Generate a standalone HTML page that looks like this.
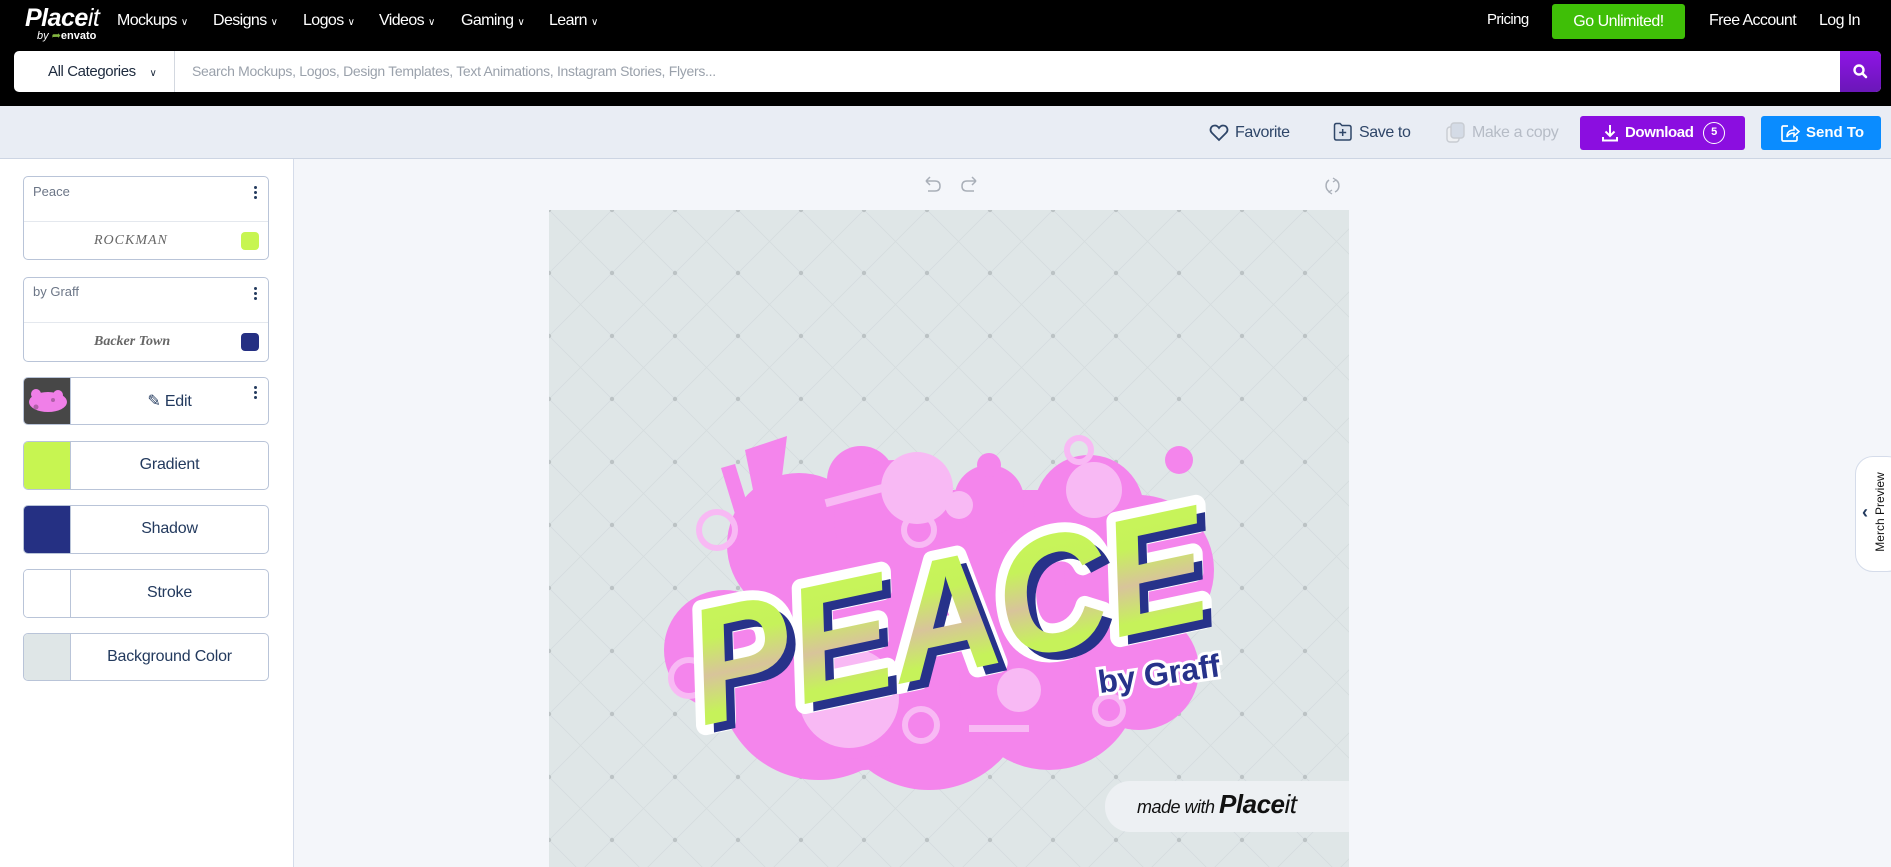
<!DOCTYPE html>
<html><head><meta charset="utf-8"><style>
*{box-sizing:border-box;margin:0;padding:0}
body{width:1891px;height:867px;overflow:hidden;background:#f4f6fa;font-family:"Liberation Sans",sans-serif;position:relative;color:#233a5e}
.abs{position:absolute}
#top{left:0;top:0;width:1891px;height:106px;background:#000}
.nav{color:#fff;font-size:16px;top:12px;letter-spacing:-0.6px}
.nav .c{font-size:10px;margin-left:4px}
#search{left:14px;top:51px;width:1867px;height:41px;background:#fff;border-radius:5px;overflow:hidden}
#tb{left:0;top:106px;width:1891px;height:53px;background:#e9edf4;border-bottom:1px solid #cdd5e3}
.tbi{top:124px;font-size:16px;color:#2f4668;letter-spacing:-0.4px}
#left{left:0;top:159px;width:294px;height:708px;background:#fff;border-right:1px solid #d5dcea}
.card{position:absolute;left:23px;width:246px;border:1px solid #b9c4d8;border-radius:5px;background:#fff;overflow:hidden}
.sw{position:absolute;left:0;top:0;width:47px;height:100%;border-right:1px solid #b9c4d8}
.lbl{position:absolute;left:47px;right:0;text-align:center;font-size:16px;color:#233a5e;letter-spacing:-0.2px}
.dots{position:absolute;right:10px;width:4px}
.dots i{display:block;width:3px;height:3px;border-radius:50%;background:#233a5e;margin-bottom:2px}
</style></head><body>
<div id="top" class="abs"></div>
<div class="abs" style="left:25px;top:4px;color:#fff;font-style:italic;font-size:25px;letter-spacing:-0.5px"><b>Place</b><span style="font-weight:normal">it</span></div>
<div class="abs" style="left:37px;top:29px;color:#fff;font-size:11px"><i>by</i> <span style="color:#82b541">&#10150;</span><b>envato</b></div>
<div class="abs nav" style="left:117px">Mockups<span class="c">&#8744;</span></div>
<div class="abs nav" style="left:213px">Designs<span class="c">&#8744;</span></div>
<div class="abs nav" style="left:303px">Logos<span class="c">&#8744;</span></div>
<div class="abs nav" style="left:379px">Videos<span class="c">&#8744;</span></div>
<div class="abs nav" style="left:461px">Gaming<span class="c">&#8744;</span></div>
<div class="abs nav" style="left:549px">Learn<span class="c">&#8744;</span></div>
<div class="abs nav" style="left:1487px;top:11px;font-size:15px">Pricing</div>
<div class="abs" style="left:1552px;top:4px;width:133px;height:35px;background:#3fbf07;border-radius:3px;color:#fff;font-size:16px;text-align:center;line-height:35px;letter-spacing:-0.5px">Go Unlimited!</div>
<div class="abs nav" style="left:1709px;font-size:16px">Free Account</div>
<div class="abs nav" style="left:1819px;font-size:16px">Log In</div>
<div id="search" class="abs">
 <div class="abs" style="left:0;top:0;width:161px;height:41px;border-right:1px solid #d3d8e0;font-size:15px;color:#1d2a3d;line-height:41px;padding-left:34px;letter-spacing:-0.4px">All Categories <span style="font-size:10px;margin-left:10px">&#8744;</span></div>
 <div class="abs" style="left:178px;top:0;line-height:41px;font-size:14px;color:#9aa1ab;letter-spacing:-0.3px">Search Mockups, Logos, Design Templates, Text Animations, Instagram Stories, Flyers...</div>
 <div class="abs" style="left:1826px;top:0;width:41px;height:41px;background:linear-gradient(#8f14e6,#6a17b8)">
  <svg width="41" height="41"><circle cx="19" cy="19" r="4.5" fill="none" stroke="#fff" stroke-width="2.4"/><line x1="22.5" y1="22.5" x2="26" y2="26" stroke="#fff" stroke-width="2.6" stroke-linecap="round"/></svg>
 </div>
</div>
<div id="tb" class="abs"></div>
<svg class="abs" style="left:1209px;top:123px" width="20" height="20"><path d="M10 17 L3 10 C0 7 2 2.5 6 2.5 C8 2.5 9.3 4 10 5 C10.7 4 12 2.5 14 2.5 C18 2.5 20 7 17 10 Z" fill="none" stroke="#2f4668" stroke-width="1.8"/></svg>
<div class="abs tbi" style="left:1235px">Favorite</div>
<svg class="abs" style="left:1333px;top:122px" width="20" height="20"><path d="M1.5 3.5 Q1.5 1.5 3.5 1.5 L7 1.5 L9 3.5 L16 3.5 Q18 3.5 18 5.5 L18 16 Q18 18 16 18 L3.5 18 Q1.5 18 1.5 16 Z" fill="#dfe5ef" stroke="#2f4668" stroke-width="1.5"/><path d="M9.7 7 V14 M6.2 10.5 H13.2" stroke="#2f4668" stroke-width="1.5"/></svg>
<div class="abs tbi" style="left:1359px">Save to</div>
<svg class="abs" style="left:1446px;top:122px" width="20" height="22"><rect x="1" y="5" width="12" height="15" rx="3" fill="#eef0f3" stroke="#c8ccd2" stroke-width="1.4"/><rect x="5" y="1" width="13" height="15" rx="3" fill="#d4dbe6" stroke="#c8ccd2" stroke-width="1.4"/></svg>
<div class="abs tbi" style="left:1472px;color:#b6bcc6">Make a copy</div>
<div class="abs" style="left:1580px;top:116px;width:165px;height:34px;background:#8b0ee0;border-radius:3px;color:#fff;font-weight:bold;font-size:15px;line-height:34px;letter-spacing:-0.4px">
 <svg class="abs" style="left:21px;top:8px" width="18" height="18"><path d="M9 1 V12 M4.5 7.5 L9 12 L13.5 7.5 M2 13 V16.5 H16 V13" fill="none" stroke="#fff" stroke-width="2"/></svg>
 <span class="abs" style="left:45px">Download</span>
 <span class="abs" style="left:123px;top:6px;width:22px;height:22px;border:1.5px solid #fff;border-radius:50%;font-size:11px;line-height:19px;text-align:center">5</span>
</div>
<div class="abs" style="left:1761px;top:116px;width:120px;height:34px;background:#0a8cff;border-radius:3px;color:#fff;font-weight:bold;font-size:15px;line-height:34px">
 <svg class="abs" style="left:19px;top:8px" width="20" height="19"><path d="M8 2 H3.5 Q2 2 2 3.5 V15.5 Q2 17 3.5 17 H15.5 Q17 17 17 15.5 V12" fill="none" stroke="#fff" stroke-width="1.7"/><path d="M7 13 Q7 6 14 6 V3 L19 7.5 L14 12 V9 Q9 9 7 13 Z" fill="none" stroke="#fff" stroke-width="1.6"/></svg>
 <span class="abs" style="left:45px">Send To</span>
</div>
<div id="left" class="abs"></div>
<div class="card" style="top:176px;height:84px">
 <div class="abs" style="left:9px;top:7px;font-size:13px;color:#6c7687">Peace</div>
 <div class="dots" style="top:9px"><i></i><i></i><i></i></div>
 <div class="abs" style="left:0;right:0;top:44px;border-top:1px solid #e4e8ee"></div>
 <div class="abs" style="left:70px;top:56px;font-family:'Liberation Serif',serif;font-style:italic;font-size:14px;color:#666;letter-spacing:1px">ROCKMAN</div>
 <div class="abs" style="left:217px;top:55px;width:18px;height:18px;border-radius:4px;background:#c7f551"></div>
</div>
<div class="card" style="top:277px;height:85px">
 <div class="abs" style="left:9px;top:6px;font-size:13px;color:#6c7687">by Graff</div>
 <div class="dots" style="top:9px"><i></i><i></i><i></i></div>
 <div class="abs" style="left:0;right:0;top:44px;border-top:1px solid #e4e8ee"></div>
 <div class="abs" style="left:70px;top:56px;font-family:'Liberation Serif',serif;font-weight:bold;font-style:italic;font-size:14px;color:#666">Backer Town</div>
 <div class="abs" style="left:217px;top:55px;width:18px;height:18px;border-radius:4px;background:#253083"></div>
</div>
<div class="card" style="top:377px;height:48px">
 <div class="sw" style="background:#474747;overflow:hidden"><svg width="47" height="46"><ellipse cx="24" cy="24" rx="19" ry="10" fill="#f07fe8"/><circle cx="12" cy="16" r="5" fill="#f07fe8"/><circle cx="34" cy="17" r="5" fill="#f07fe8"/><circle cx="12" cy="29" r="2.5" fill="#b060a8"/><circle cx="29" cy="22" r="2" fill="#b060a8"/></svg></div>
 <div class="lbl" style="top:13px">&#9998; Edit</div>
 <div class="dots" style="top:8px"><i></i><i></i><i></i></div>
</div>
<div class="card" style="top:441px;height:49px"><div class="sw" style="background:#c7f551"></div><div class="lbl" style="top:14px">Gradient</div></div>
<div class="card" style="top:505px;height:49px"><div class="sw" style="background:#253083"></div><div class="lbl" style="top:14px">Shadow</div></div>
<div class="card" style="top:569px;height:49px"><div class="sw" style="background:#fff"></div><div class="lbl" style="top:14px">Stroke</div></div>
<div class="card" style="top:633px;height:48px"><div class="sw" style="background:#dfe6e7"></div><div class="lbl" style="top:14px">Background Color</div></div>

<svg class="abs" style="left:923px;top:176px" width="60" height="20"><path d="M3 5 H12 Q17 5 17 10 Q17 15 12 15 H5 M3 5 L7 1 M3 5 L7 9" fill="none" stroke="#a9afb8" stroke-width="1.5"/><path d="M53 5 H44 Q39 5 39 10 Q39 15 44 15 H51 M53 5 L49 1 M53 5 L49 9" fill="none" stroke="#a9afb8" stroke-width="1.5"/></svg>
<svg class="abs" style="left:1324px;top:176px" width="18" height="20"><path d="M5 4 A7 7 0 0 0 6 16 M12 4 A7 7 0 0 1 11 16" fill="none" stroke="#a9afb8" stroke-width="1.5"/><path d="M9 2 L12 4 L9 6 M8 14 L5 16 L8 18" fill="none" stroke="#a9afb8" stroke-width="1.3"/></svg>

<svg class="abs" style="left:549px;top:210px" width="800" height="657" viewBox="0 0 800 657">
 <defs>
  <pattern id="dm" width="63" height="63" patternUnits="userSpaceOnUse">
   <path d="M0 0 L63 63 M63 0 L0 63" stroke="#d5dcde" stroke-width="0.8"/>
   <circle cx="0" cy="0" r="2.2" fill="#bcc3c5"/><circle cx="63" cy="0" r="2.2" fill="#bcc3c5"/><circle cx="0" cy="63" r="2.2" fill="#bcc3c5"/><circle cx="63" cy="63" r="2.2" fill="#bcc3c5"/>
  </pattern>
  <linearGradient id="lg" x1="0" y1="0" x2="0" y2="1">
   <stop offset="0" stop-color="#c9f75a"/><stop offset="0.35" stop-color="#c6f25a"/><stop offset="0.55" stop-color="#d8c49a"/><stop offset="0.75" stop-color="#c6f25a"/><stop offset="1" stop-color="#c6f25a"/>
  </linearGradient>
 </defs>
 <rect width="800" height="657" fill="#dfe6e7"/>
 <rect width="800" height="657" fill="url(#dm)"/>
 <g fill="#f485ec">
  <polygon points="196,240 238,226 228,308 210,310"/>
  <polygon points="172,258 186,254 208,325 194,330"/>
  <circle cx="312" cy="270" r="34"/><circle cx="250" cy="335" r="72"/><circle cx="345" cy="310" r="60"/>
  <rect x="310" y="280" width="250" height="200"/>
  <circle cx="440" cy="290" r="35"/><circle cx="540" cy="300" r="55"/><circle cx="590" cy="360" r="75"/>
  <circle cx="175" cy="440" r="60"/><circle cx="270" cy="470" r="100"/><circle cx="380" cy="480" r="100"/><circle cx="500" cy="470" r="90"/><circle cx="590" cy="460" r="60"/>
  <circle cx="630" cy="250" r="14"/><circle cx="440" cy="255" r="12"/>
  <polygon points="288,550 340,545 342,558 290,562"/>
 </g>
 <g fill="#f8b9f4">
  <circle cx="368" cy="278" r="36"/><circle cx="410" cy="295" r="14"/><circle cx="300" cy="488" r="50"/><circle cx="470" cy="480" r="22"/><circle cx="545" cy="280" r="28"/>
  <rect x="275" y="275" width="110" height="8" transform="rotate(-15 330 280)"/><rect x="420" y="515" width="60" height="7"/>
 </g>
 <g fill="none" stroke="#f8b9f4" stroke-width="6">
  <circle cx="530" cy="240" r="12"/><circle cx="370" cy="320" r="15"/><circle cx="140" cy="468" r="18"/><circle cx="372" cy="515" r="16"/><circle cx="168" cy="320" r="18"/><circle cx="560" cy="500" r="14"/>
 </g>
 <g transform="rotate(-12 400 400)" font-family="Liberation Sans,sans-serif" font-weight="bold" font-style="italic">
  <text x="135" y="462" font-size="165" textLength="525" lengthAdjust="spacingAndGlyphs" fill="#fff" stroke="#fff" stroke-width="20" stroke-linejoin="round">PEACE</text>
  <text x="142" y="471" font-size="165" textLength="525" lengthAdjust="spacingAndGlyphs" fill="#27328a">PEACE</text>
  <text x="135" y="462" font-size="165" textLength="525" lengthAdjust="spacingAndGlyphs" fill="url(#lg)">PEACE</text>
 </g>
 <text x="548" y="476" font-family="Liberation Sans,sans-serif" font-weight="bold" font-size="32" fill="#27328a" stroke="#fff" stroke-width="6" paint-order="stroke" transform="rotate(-8 600 460)">by Graff</text>
 <rect x="556" y="571" width="280" height="51" rx="25" fill="#edf0f3"/>
 <text x="588" y="603" font-family="Liberation Sans,sans-serif" font-style="italic" font-size="18" fill="#111" letter-spacing="-0.5">made with <tspan font-weight="bold" font-size="26">Place</tspan><tspan font-size="26">it</tspan></text>
</svg>
<div class="abs" style="left:1855px;top:456px;width:50px;height:116px;background:#fff;border:1px solid #d5dcea;border-radius:18px"></div>
<div class="abs" style="left:1862px;top:502px;font-size:18px;font-weight:bold;color:#233a5e">&#8249;</div>
<div class="abs" style="left:1830px;top:505px;width:100px;transform:rotate(-90deg);font-size:12px;color:#111;text-align:center">Merch Preview</div>
</body></html>
